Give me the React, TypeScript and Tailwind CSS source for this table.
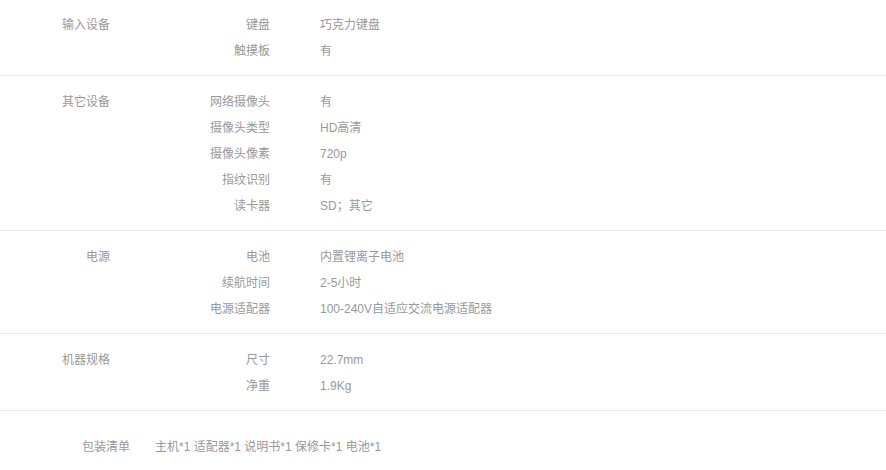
const specs = [
  {
    group: "输入设备",
    rows: [
      ["键盘", "巧克力键盘"],
      ["触摸板", "有"],
    ],
  },
  {
    group: "其它设备",
    rows: [
      ["网络摄像头", "有"],
      ["摄像头类型", "HD高清"],
      ["摄像头像素", "720p"],
      ["指纹识别", "有"],
      ["读卡器", "SD；其它"],
    ],
  },
  {
    group: "电源",
    rows: [
      ["电池", "内置锂离子电池"],
      ["续航时间", "2-5小时"],
      ["电源适配器", "100-240V自适应交流电源适配器"],
    ],
  },
  {
    group: "机器规格",
    rows: [
      ["尺寸", "22.7mm"],
      ["净重", "1.9Kg"],
    ],
  },
];

const App = () => {
  return (
    <div
      className="w-[886px] h-[470px] bg-white text-[12px] text-[#999]"
      style={{ fontFamily: '"Liberation Sans", "Noto Sans CJK SC", sans-serif' }}
    >
      {specs.map((section, i) => (
        <div
          key={section.group}
          className={`flex border-b border-[#e8e8e8] ${i === 0 ? "pt-3 pb-[11px]" : "pt-[13px] pb-[11px]"}`}
        >
          <div className="w-[110px] shrink-0 text-right leading-[26px]">
            {section.group}
          </div>
          <div className="flex flex-col">
            {section.rows.map(([key, value]) => (
              <div key={key} className="flex h-[26px] items-center">
                <div className="w-[160px] text-right">{key}</div>
                <div className="pl-[50px]">{value}</div>
              </div>
            ))}
          </div>
        </div>
      ))}
      <div className="flex items-center pt-[23px]">
        <div className="w-[130px] text-right leading-[26px]">包装清单</div>
        <div className="pl-[25px]">主机*1 适配器*1 说明书*1 保修卡*1 电池*1</div>
      </div>
    </div>
  );
};

export default App;
